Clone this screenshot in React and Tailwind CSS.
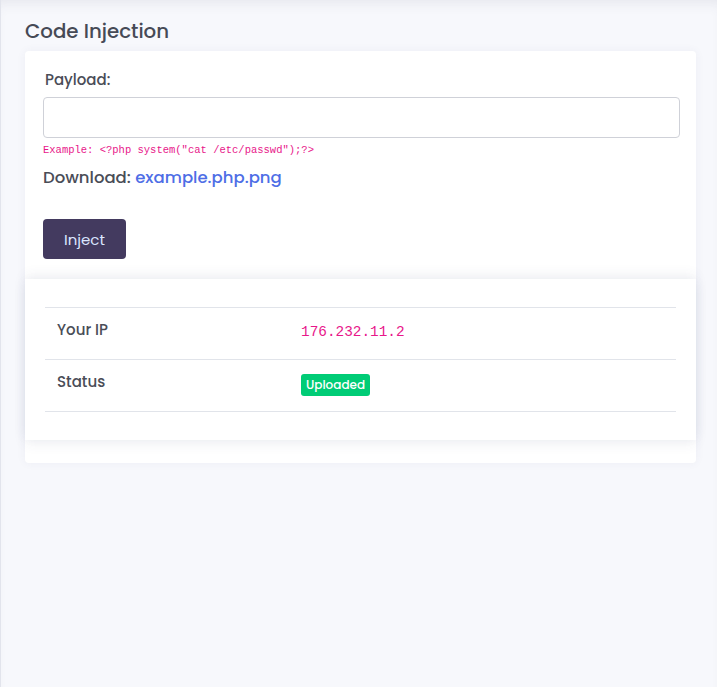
import React from "react";

export default function App() {
  return (
    <div
      className="min-h-[687px] bg-[#f7f8fc] border-l border-[#e2e4ec] pl-6 pr-[21px] pt-[17px] shadow-[inset_0_10px_14px_-8px_rgba(60,60,90,0.10)]"
      style={{ fontFamily: '"Poppins", "Open Sans", sans-serif' }}
    >
      <h1 className="text-[19.8px] leading-[28px] font-medium text-[#464a56] mb-[6px]">Code Injection</h1>
      <div className="bg-white rounded-[4px] shadow-[0_0_10px_rgba(60,70,120,0.06)] pb-[23px]">
        <div className="pl-[18px] pr-[16px] pt-[18px] pb-[20px]">
          <label className="block pl-[2px] text-[15px] leading-[22px] font-medium text-[#4a4d57] mb-[6px]">Payload:</label>
          <input
            type="text"
            className="block w-full h-[41px] border border-[#cfd1d8] rounded-[4px] bg-white outline-none px-3"
          />
          <div
            className="text-[10.5px] leading-[14px] text-[#e8178a] mt-[5px]"
            style={{ fontFamily: '"Liberation Mono", monospace' }}
          >
            Example: &lt;?php system("cat /etc/passwd");?&gt;
          </div>
          <div className="mt-[9px] text-[16.5px] leading-[24px] font-medium text-[#4a4d57]">
            Download: <a className="text-[#4e6ee6]">example.php.png</a>
          </div>
          <button className="mt-[29px] w-[83px] h-[40px] pt-[2px] rounded-[4px] bg-[#433a5f] text-[#dbe6ff] text-[15px]">
            Inject
          </button>
        </div>
        <div className="bg-white shadow-[0_-4px_12px_rgba(60,70,120,0.07),0_4px_12px_rgba(60,70,120,0.07)] px-5 pt-7 pb-7">
          <div className="border-t border-[#e1e4ea]">
            <div className="flex h-[52px] border-b border-[#e1e4ea]">
              <div className="w-[256px] pl-3 pt-[11px] text-[15px] leading-[22px] font-medium text-[#4a4d57]">Your IP</div>
              <div
                className="pt-[14px] text-[14.4px] leading-[20px] text-[#e8178a]"
                style={{ fontFamily: '"Liberation Mono", monospace' }}
              >
                176.232.11.2
              </div>
            </div>
            <div className="flex h-[52px] border-b border-[#e1e4ea]">
              <div className="w-[256px] pl-3 pt-[11px] text-[15px] leading-[22px] font-medium text-[#4a4d57]">Status</div>
              <div className="pt-[14px]">
                <span className="flex items-center px-[5px] h-[22px] rounded-[3px] bg-[#00cc76] text-white text-[12px] font-medium">
                  Uploaded
                </span>
              </div>
            </div>
          </div>
        </div>
      </div>
    </div>
  );
}
